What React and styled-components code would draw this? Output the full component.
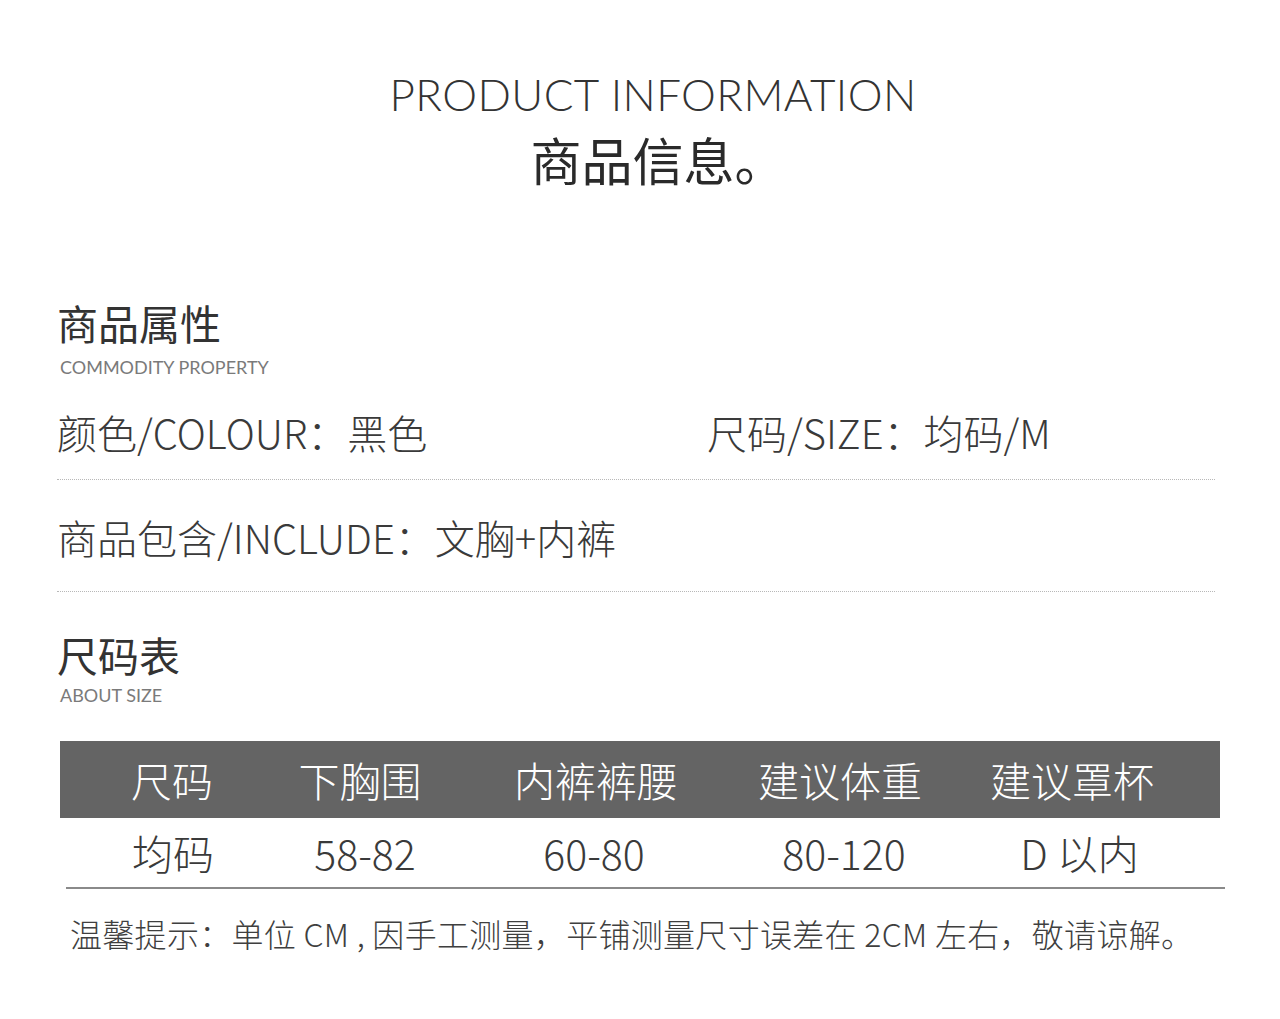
import React from "react";
import styled, { createGlobalStyle } from "styled-components";

const GlobalStyle = createGlobalStyle`
    html, body {
        margin: 0;
        padding: 0;
        background: #fff;
    }
    body {
        font-family: "Noto Sans CJK SC", "Noto Sans", sans-serif;
        color: #333;
    }
`;

const Page = styled.div`
    width: 1280px;
    min-height: 1019px;
    box-sizing: border-box;
    padding: 72px 0 0;
    background: #fff;
`;

const Hero = styled.header`
    display: flex;
    flex-direction: column;
    align-items: center;
    padding-left: 26px;
`;

const EnTitle = styled.h1`
    margin: 0;
    font-family: Lato, "Liberation Sans", sans-serif;
    font-weight: 300;
    font-size: 44px;
    line-height: 44px;
    letter-spacing: 0.4px;
    color: #333;
`;

const CnTitle = styled.h2`
    margin: 18px 0 0 10px;
    font-family: "Noto Sans CJK SC", sans-serif;
    font-weight: 400;
    font-size: 51px;
    line-height: 50px;
    color: #2a2a2a;
`;

const Body = styled.main`
    padding: 0 65px 0 57px;
`;

const SectionHead = styled.div`
    display: flex;
    flex-direction: column;
    margin-top: ${(p) => p.$top}px;
`;

const CnHeading = styled.h3`
    margin: 0;
    font-weight: 400;
    font-size: 41px;
    line-height: 41px;
    color: #333;
`;

const EnSub = styled.span`
    margin-top: ${(p) => p.$gap}px;
    padding-left: 3px;
    font-family: Lato, "Open Sans", sans-serif;
    font-size: 18px;
    line-height: 18px;
    color: #7a7a7a;
`;

const PropRow = styled.div`
    display: flex;
    align-items: center;
    height: ${(p) => p.$h}px;
    padding-top: ${(p) => p.$pt}px;
    border-bottom: 1px dotted #b8b8b8;
`;

const PropItem = styled.div`
    width: ${(p) => p.$w || "auto"};
    font-weight: 300;
    font-size: 40px;
    line-height: 40px;
    color: #3a3a3a;
    white-space: nowrap;
`;

const Table = styled.div`
    margin: 37px -5px 0 3px;
`;

const HeaderRow = styled.div`
    display: grid;
    grid-template-columns: 224px 152px 320px 168px 1fr;
    align-items: center;
    height: 77px;
    background: #646464;
`;

const DataRow = styled.div`
    display: grid;
    grid-template-columns: 224px 152px 320px 168px 1fr;
    align-items: center;
    height: 69px;
    margin: 0 -5px 0 6px;
    border-bottom: 2px solid #8a8a8a;
`;

const Cell = styled.div`
    text-align: center;
    font-weight: 300;
    font-size: 41px;
    line-height: 41px;
    white-space: nowrap;
    color: ${(p) => (p.$head ? "#fff" : "#3a3a3a")};
    transform: translateX(${(p) => p.$dx || 0}px);
`;

const Note = styled.p`
    margin: 28px 0 0 13px;
    font-weight: 300;
    font-size: 32px;
    line-height: 32px;
    letter-spacing: 0.3px;
    color: #3f3f3f;
    white-space: nowrap;
`;

const headers = ["尺码", "下胸围", "内裤裤腰", "建议体重", "建议罩杯"];
const values = ["均码", "58-82", "60-80", "80-120", "D 以内"];
const shifts = [-5, -1, -8, -2, 2];

export default function App() {
    return (
        <>
            <GlobalStyle />
            <Page>
                <Hero>
                    <EnTitle>PRODUCT INFORMATION</EnTitle>
                    <CnTitle>商品信息。</CnTitle>
                </Hero>
                <Body>
                    <SectionHead $top={118}>
                        <CnHeading>商品属性</CnHeading>
                        <EnSub $gap={15}>COMMODITY PROPERTY</EnSub>
                    </SectionHead>
                    <PropRow $h={95} $pt={8}>
                        <PropItem $w="650px">颜色/COLOUR：黑色</PropItem>
                        <PropItem>尺码/SIZE：均码/M</PropItem>
                    </PropRow>
                    <PropRow $h={109} $pt={2}>
                        <PropItem>商品包含/INCLUDE：文胸+内裤</PropItem>
                    </PropRow>
                    <SectionHead $top={42}>
                        <CnHeading>尺码表</CnHeading>
                        <EnSub $gap={11}>ABOUT SIZE</EnSub>
                    </SectionHead>
                    <Table>
                        <HeaderRow>
                            {headers.map((h) => (
                                <Cell key={h} $head>
                                    {h}
                                </Cell>
                            ))}
                        </HeaderRow>
                        <DataRow>
                            {values.map((v, i) => (
                                <Cell key={v} $dx={shifts[i]}>
                                    {v}
                                </Cell>
                            ))}
                        </DataRow>
                    </Table>
                    <Note>温馨提示：单位 CM , 因手工测量，平铺测量尺寸误差在 2CM 左右，敬请谅解。</Note>
                </Body>
            </Page>
        </>
    );
}
